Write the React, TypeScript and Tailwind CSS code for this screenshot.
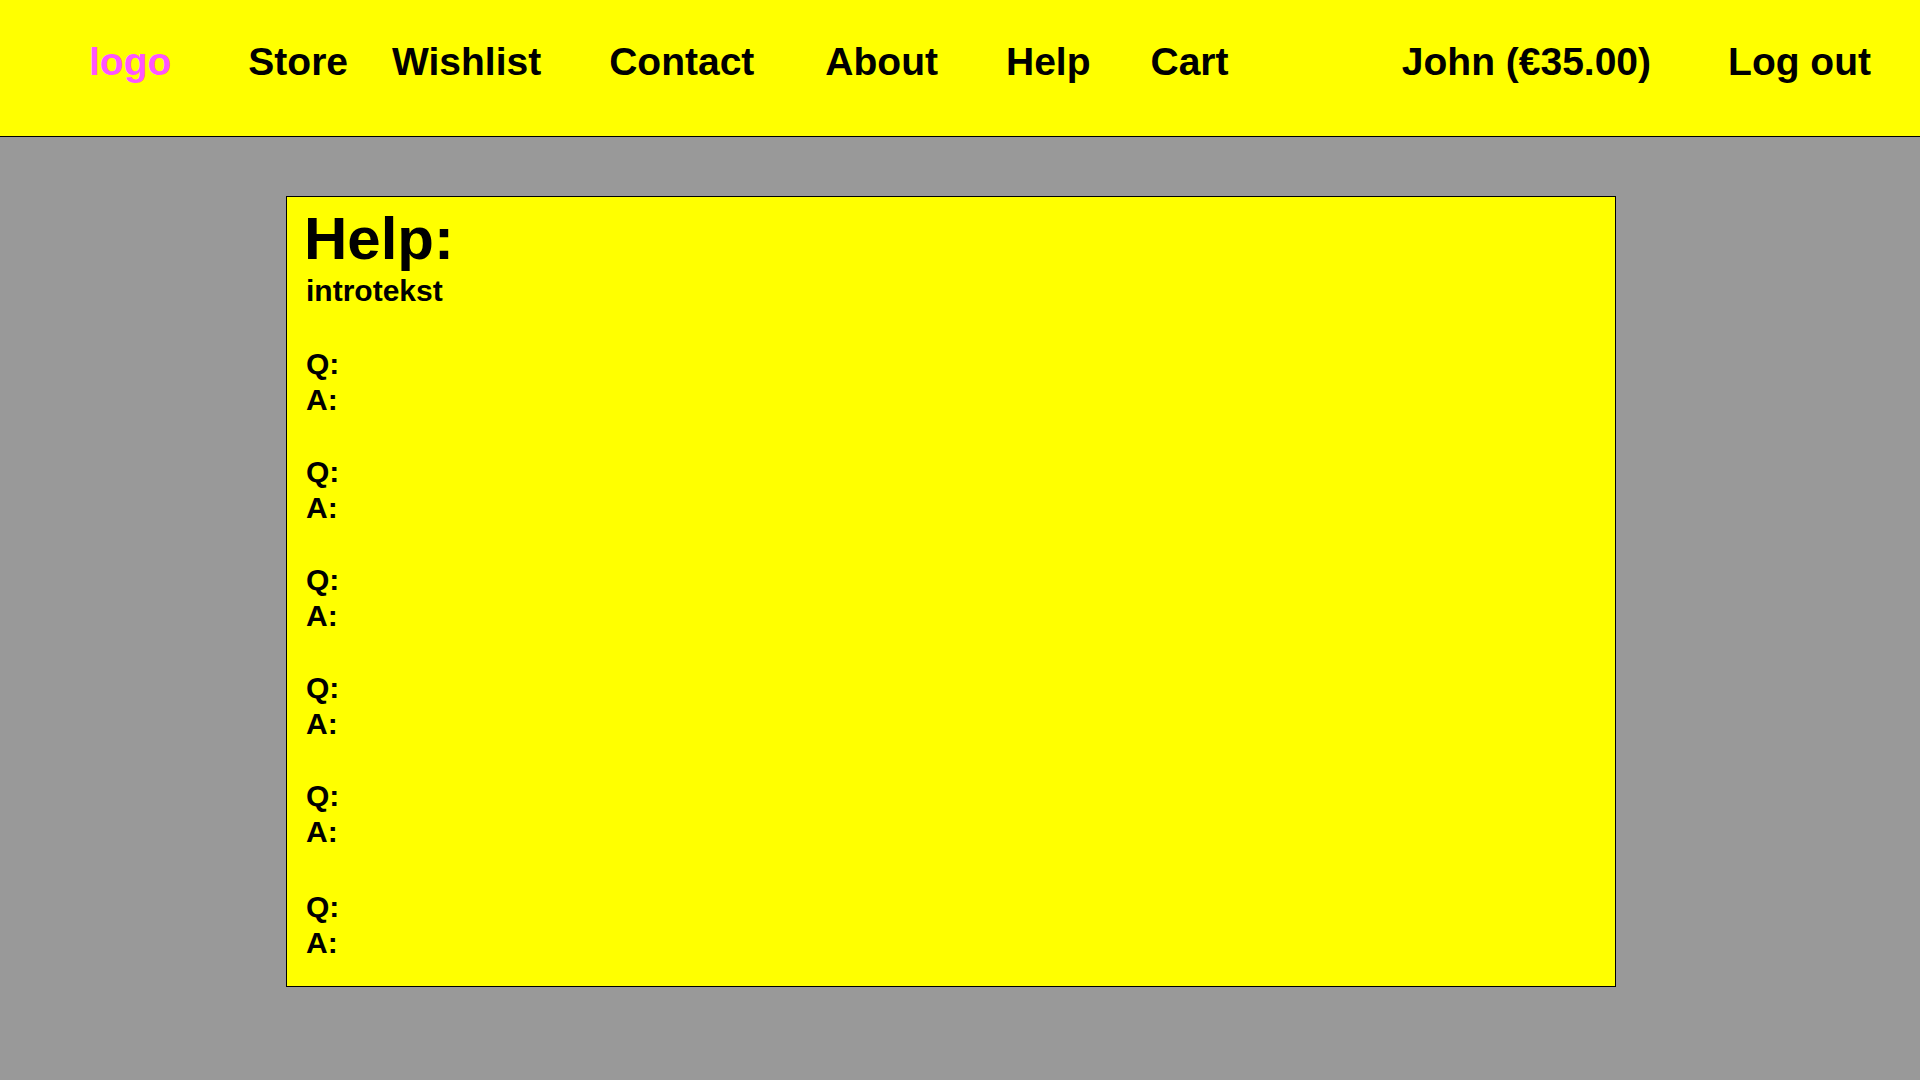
const navLinks = [
  { label: 'Store', ml: 'ml-[77px]' },
  { label: 'Wishlist', ml: 'ml-[44px]' },
  { label: 'Contact', ml: 'ml-[68px]' },
  { label: 'About', ml: 'ml-[71px]' },
  { label: 'Help', ml: 'ml-[68px]' },
  { label: 'Cart', ml: 'ml-[60px]' },
];

const faq = [1, 2, 3, 4, 5, 6];

export default function App() {
  return (
    <div className="min-h-screen bg-[#999999] font-['Liberation_Sans',Arial,sans-serif] text-black">
      {/* header */}
      <header className="h-[137px] bg-[#ffff00] border-b border-black">
        <nav className="flex items-start pt-[40px] pl-[89px] pr-[49px] text-[39px] leading-[44px] font-bold whitespace-nowrap">
          <a href="#" className="text-[#ff55ff]">
            logo
          </a>
          {navLinks.map((link) => (
            <a key={link.label} href="#" className={link.ml}>
              {link.label}
            </a>
          ))}
          <div className="ml-auto flex">
            <span>John (€35.00)</span>
            <a href="#" className="ml-[77px]">
              Log out
            </a>
          </div>
        </nav>
      </header>

      {/* help card */}
      <main className="pt-[59px] pl-[286px]">
        <div className="w-[1330px] h-[791px] bg-[#ffff00] border border-black pt-[8px] pl-[17px]">
          <h1 className="text-[60px] leading-[68px] font-bold">Help:</h1>
          <div className="pl-[2px] text-[30px] leading-[36px] font-bold">
            <p>introtekst</p>
            <div className="mt-[37px] flex flex-col gap-[36px]">
              {faq.map((n) => (
                <div key={n} className={n === 6 ? 'mt-[3px]' : ''}>
                  <p>Q:</p>
                  <p>A:</p>
                </div>
              ))}
            </div>
          </div>
        </div>
      </main>
    </div>
  );
}
